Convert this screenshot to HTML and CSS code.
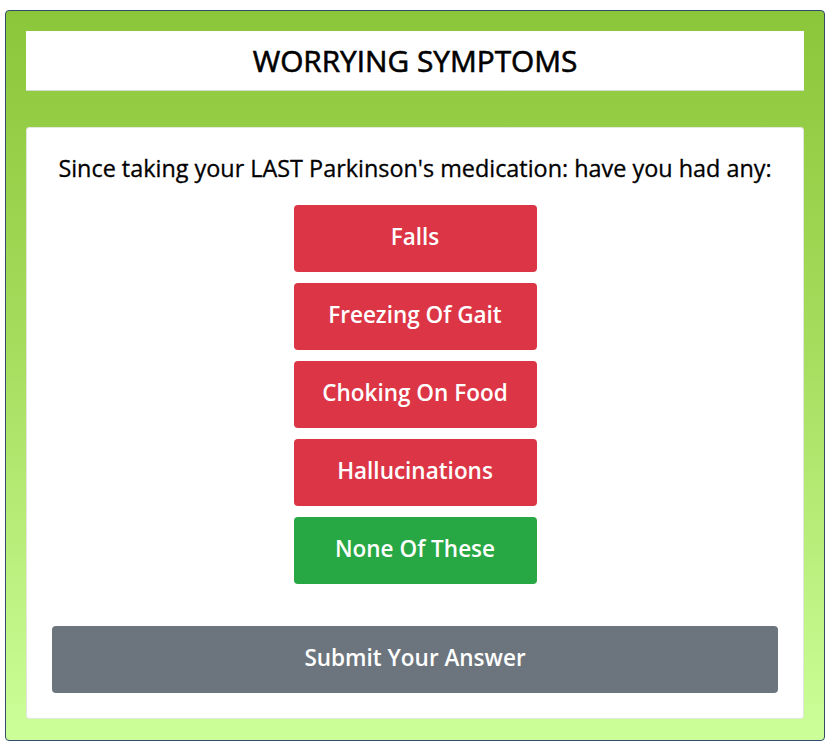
FILE: index.html
```html
<!DOCTYPE html>
<html>
<head>
<meta charset="utf-8">
<link rel="stylesheet" href="styles.css">
</head>
<body>
<div class="frame">
  <div class="header"><h1 class="title">WORRYING SYMPTOMS</h1></div>
  <div class="card">
    <p class="question">Since taking your LAST Parkinson's medication: have you had any:</p>
    <div class="options">
      <button class="btn btn-red">Falls</button>
      <button class="btn btn-red">Freezing Of Gait</button>
      <button class="btn btn-red">Choking On Food</button>
      <button class="btn btn-red">Hallucinations</button>
      <button class="btn btn-green">None Of These</button>
    </div>
    <button class="submit">Submit Your Answer</button>
  </div>
</div>
</body>
</html>
```
FILE: styles.css
```css
html, body {
  margin: 0;
  padding: 0;
  background: #fff;
}
body {
  padding: 10px 8px 0 5px;
  font-family: "Open Sans", "Noto Sans", sans-serif;
  color: #111;
}
.frame {
  height: 731px;
  box-sizing: border-box;
  border: 1px solid #2f4d6b;
  border-radius: 4px;
  background: linear-gradient(to bottom, #8bc63a 0%, #a6dc5c 45%, #ccff99 100%);
  padding: 20px 20px 21px 20px;
  display: flex;
  flex-direction: column;
  gap: 36px;
}
.header {
  background: #fff;
  height: 60px;
  display: flex;
  align-items: center;
  justify-content: center;
  border-bottom: 1px solid #d6dccd;
  box-sizing: border-box;
}
.title {
  margin: 0;
  font-size: 29.8px;
  font-weight: 400;
  -webkit-text-stroke: 0.6px #000;
  color: #000;
  letter-spacing: 0;
}
.card {
  flex: 1;
  background: #fff;
  border-radius: 3px;
  border: 1px solid #e2e6dc;
  padding: 0 25px 25px;
  display: flex;
  flex-direction: column;
  align-items: center;
}
.question {
  margin: 24px 0 0;
  font-size: 23.4px;
  line-height: 32px;
  color: #000;
  -webkit-text-stroke: 0.3px #000;
  text-align: center;
  white-space: nowrap;
}
.options {
  margin-top: 21px;
  display: flex;
  flex-direction: column;
  gap: 11px;
}
.btn {
  width: 243px;
  height: 67px;
  border: none;
  border-radius: 4px;
  color: #fff;
  font-family: inherit;
  font-size: 22.5px;
  font-weight: 600;
  padding: 0 0 4px;
}
.btn-red { background: #dc3545; }
.btn-green { background: #28a745; }
.submit {
  margin-top: auto;
  width: 100%;
  height: 67px;
  border: none;
  border-radius: 4px;
  background: #6c757d;
  color: #fff;
  font-family: inherit;
  font-size: 22.5px;
  font-weight: 600;
  padding: 0 0 4px;
}
```
